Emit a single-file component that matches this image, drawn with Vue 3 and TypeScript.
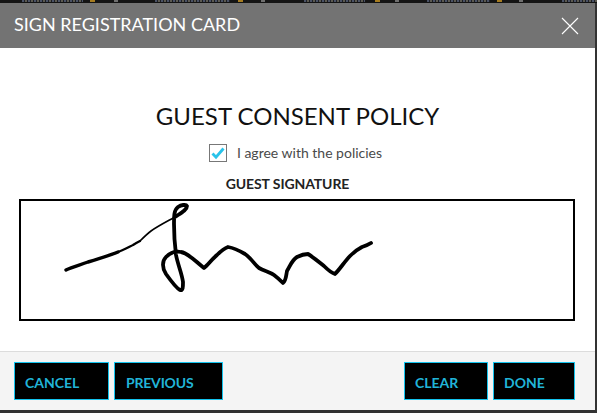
<script setup lang="ts">
const thin = "M140 241 C144 237 147 234 151 231 C158 226 166 222 175 217";
const mid = "M118 252 C124 250 129 247 133 245 C136 243 138 242 140 241";
const thick = [
  "M66 270 C72 267 80 265 88 262 C98 259 108 256 118 252",
  "M175 217 C181 213 187 210 187 206 C186 204 181 205 178 207 C174 210 174 216 174 224 C174 236 175 247 176 255 C178 265 182 274 183 282 C183 287 183 291 180 290 C176 288 171 281 166 274 C162 268 162 261 166 257 C170 253 176 251 181 252 C188 253 195 261 204 268 C208 265 212 259 217 255 C221 251 225 248 228 247 C234 248 240 251 245 254 C251 258 254 264 259 268 C264 271 270 272 274 275 C278 278 281 281 283 283 C286 281 286 276 287 271 C290 266 292 260 297 257 C301 255 304 254 308 254 C313 257 319 262 324 266 C328 270 332 273 335 274 C340 269 345 261 350 256 C354 252 358 249 362 247 C365 246 368 245 371 243",
];
type Seg = { gap: number; width: number; kind: string };
const segments: Seg[] = [
  { gap: 22, width: 61, kind: "smudge" },
  { gap: 7, width: 5, kind: "gold" },
  { gap: 19, width: 4, kind: "grey" },
  { gap: 37, width: 75, kind: "smudge" },
  { gap: 8, width: 5, kind: "gold" },
  { gap: 18, width: 4, kind: "grey" },
  { gap: 39, width: 61, kind: "smudge" },
  { gap: 10, width: 5, kind: "gold" },
  { gap: 15, width: 4, kind: "grey" },
  { gap: 28, width: 63, kind: "smudge" },
  { gap: 7, width: 5, kind: "gold" },
  { gap: 17, width: 4, kind: "grey" },
  { gap: 39, width: 35, kind: "smudge" },
];
</script>

<template>
  <div class="page">
    <div class="backdrop" aria-hidden="true">
      <i
        v-for="(s, n) in segments"
        :key="n"
        :class="['seg', s.kind]"
        :style="{ marginLeft: s.gap + 'px', width: s.width + 'px' }"
      ></i>
    </div>
    <section class="modal">
      <header class="head">
        <h1>SIGN REGISTRATION CARD</h1>
        <button class="close" aria-label="Close">
          <svg width="18" height="18" viewBox="0 0 18 18">
            <path d="M1 1 L17 17 M17 1 L1 17" stroke="#fff" stroke-width="1.1" fill="none" />
          </svg>
        </button>
      </header>
      <main class="body">
        <h2>GUEST CONSENT POLICY</h2>
        <label class="agree">
          <span class="box">
            <svg width="14" height="14" viewBox="0 0 14 14">
              <path d="M1.5 7.5 L5 11.2 L12.5 2.5" stroke="#29c3ea" stroke-width="2.8" fill="none" />
            </svg>
          </span>
          <span>I agree with the policies</span>
        </label>
        <div class="sig-label">GUEST SIGNATURE</div>
        <div class="sig">
          <svg class="ink" viewBox="0 0 597 413" width="597" height="413">
            <path :d="thin" stroke="#000" stroke-width="1.6" fill="none" stroke-linecap="round" />
            <path :d="mid" stroke="#000" stroke-width="2.3" fill="none" stroke-linecap="round" />
            <path :d="thick[0]" stroke="#000" stroke-width="3.4" fill="none" stroke-linecap="round" />
            <path :d="thick[1]" stroke="#000" stroke-width="3.8" fill="none" stroke-linecap="round" stroke-linejoin="round" />
          </svg>
        </div>
      </main>
      <footer class="foot">
        <div class="group">
          <button class="act cancel">CANCEL</button>
          <button class="act prev">PREVIOUS</button>
        </div>
        <div class="group">
          <button class="act clear">CLEAR</button>
          <button class="act done">DONE</button>
        </div>
      </footer>
    </section>
  </div>
</template>

<style>
html, body { margin: 0; background: #2b2b2b; }
</style>

<style scoped>
.page {
  width: 597px;
  height: 413px;
  overflow: hidden;
  background: #333;
  font-family: Lato, "Open Sans", sans-serif;
  display: flex;
  flex-direction: column;
}
.backdrop {
  height: 3px;
  flex: none;
  overflow: hidden;
  background: #141414;
  display: flex;
  align-items: flex-start;
}
.seg { display: block; height: 2px; flex: none; }
.smudge { background: repeating-linear-gradient(90deg, #4a5266 0 2px, #1f2128 2px 3px, #5c5a50 3px 5px, #1c1d22 5px 6px); }
.gold { background: #a67c20; }
.grey { background: #6f6f6f; }
.modal {
  width: 595px;
  height: 407px;
  flex: none;
  display: flex;
  flex-direction: column;
  background: #fff;
}
.head {
  height: 45px;
  flex: none;
  box-sizing: border-box;
  background: #737373;
  display: flex;
  align-items: center;
  justify-content: space-between;
  padding: 0 16px 0 14px;
}
.head h1 {
  margin: 0 0 3px;
  font-size: 18px;
  font-weight: 400;
  color: #fff;
}
.close {
  width: 18px;
  height: 18px;
  padding: 0;
  border: 0;
  background: none;
  display: block;
}
.close svg { display: block; }
.body {
  flex: 1;
  display: flex;
  flex-direction: column;
  align-items: center;
  padding-top: 53px;
}
.body h2 {
  margin: 0;
  font-size: 24px;
  line-height: 29px;
  font-weight: 400;
  color: #111;
}
.agree {
  display: flex;
  align-items: center;
  gap: 10px;
  margin-top: 13px;
  margin-right: 4px;
  font-size: 14px;
  line-height: 20px;
  color: #4a4a4a;
}
.box {
  width: 16px;
  height: 16px;
  border: 1px solid #777;
  display: flex;
  align-items: center;
  justify-content: center;
  background: #fff;
}
.sig-label {
  margin-top: 13px;
  margin-right: 20px;
  font-size: 14px;
  line-height: 16px;
  font-weight: 700;
  letter-spacing: -0.1px;
  color: #222;
}
.sig {
  margin-top: 7px;
  width: 552px;
  height: 118px;
  border: 2px solid #000;
  position: relative;
  margin-left: -1px;
  overflow: hidden;
}
.ink {
  position: absolute;
  left: -21px;
  top: -201px;
}
.foot {
  height: 59px;
  flex: none;
  box-sizing: border-box;
  border-top: 1px solid #dcdcdc;
  background: #f4f4f4;
  display: flex;
  justify-content: space-between;
  align-items: flex-start;
  padding: 10px 20px 0 14px;
}
.group { display: flex; gap: 5px; }
.act {
  height: 38px;
  box-sizing: border-box;
  border: 1px solid #14c4ee;
  background: #000;
  color: #20b4d8;
  font-family: inherit;
  font-size: 14px;
  font-weight: 700;
  text-align: left;
  padding: 3px 0 0 10px;
}
.cancel { width: 95px; }
.prev { width: 109px; padding-left: 11px; letter-spacing: -0.2px; }
.clear { width: 84px; }
.done { width: 82px; }
</style>
